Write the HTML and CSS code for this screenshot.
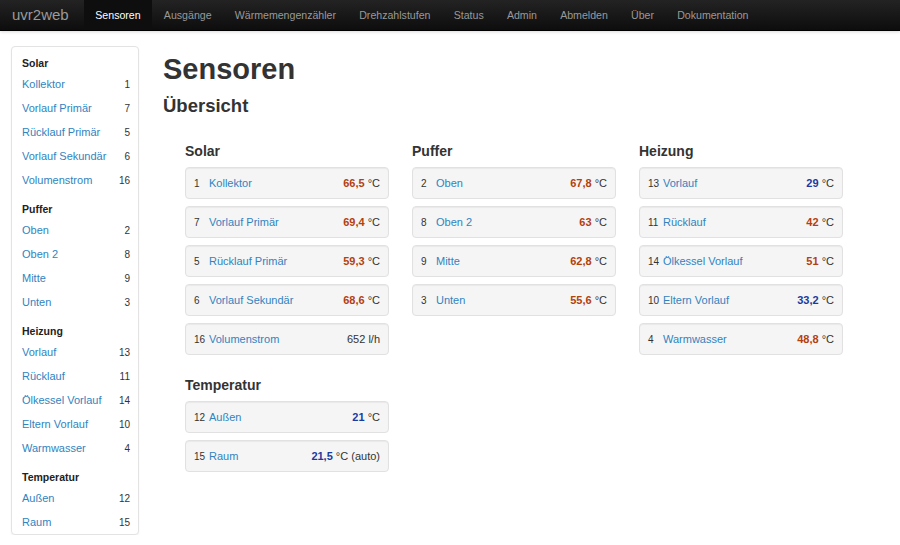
FILE: index.html
```html
<!DOCTYPE html>
<html lang="de">
<head>
<meta charset="utf-8">
<title>uvr2web – Sensoren</title>
<link rel="stylesheet" href="styles.css">
</head>
<body>
<header class="navbar">
  <a class="brand" href="#">uvr2web</a>
  <nav class="nav">
    <a class="nav-item active" href="#">Sensoren</a>
    <a class="nav-item" href="#">Ausgänge</a>
    <a class="nav-item" href="#">Wärmemengenzähler</a>
    <a class="nav-item" href="#">Drehzahlstufen</a>
    <a class="nav-item" href="#">Status</a>
    <a class="nav-item" href="#">Admin</a>
    <a class="nav-item" href="#">Abmelden</a>
    <a class="nav-item" href="#">Über</a>
    <a class="nav-item" href="#">Dokumentation</a>
  </nav>
</header>

<div class="container">
  <aside class="sidebar">
    <div class="side-header first">Solar</div>
    <a class="side-item" href="#"><span>Kollektor</span><span class="side-num">1</span></a>
    <a class="side-item" href="#"><span>Vorlauf Primär</span><span class="side-num">7</span></a>
    <a class="side-item" href="#"><span>Rücklauf Primär</span><span class="side-num">5</span></a>
    <a class="side-item" href="#"><span>Vorlauf Sekundär</span><span class="side-num">6</span></a>
    <a class="side-item" href="#"><span>Volumenstrom</span><span class="side-num">16</span></a>
    <div class="side-header">Puffer</div>
    <a class="side-item" href="#"><span>Oben</span><span class="side-num">2</span></a>
    <a class="side-item" href="#"><span>Oben 2</span><span class="side-num">8</span></a>
    <a class="side-item" href="#"><span>Mitte</span><span class="side-num">9</span></a>
    <a class="side-item" href="#"><span>Unten</span><span class="side-num">3</span></a>
    <div class="side-header">Heizung</div>
    <a class="side-item" href="#"><span>Vorlauf</span><span class="side-num">13</span></a>
    <a class="side-item" href="#"><span>Rücklauf</span><span class="side-num">11</span></a>
    <a class="side-item" href="#"><span>Ölkessel Vorlauf</span><span class="side-num">14</span></a>
    <a class="side-item" href="#"><span>Eltern Vorlauf</span><span class="side-num">10</span></a>
    <a class="side-item" href="#"><span>Warmwasser</span><span class="side-num">4</span></a>
    <div class="side-header">Temperatur</div>
    <a class="side-item" href="#"><span>Außen</span><span class="side-num">12</span></a>
    <a class="side-item" href="#"><span>Raum</span><span class="side-num">15</span></a>
  </aside>

  <main class="main">
    <h1 class="title">Sensoren</h1>
    <h2 class="subtitle">Übersicht</h2>
    <div class="columns">
      <div class="col">
        <h3 class="group">Solar</h3>
        <div class="card"><span class="num">1</span><a class="name" href="#">Kollektor</a><span class="val"><b class="hot">66,5</b> °C</span></div>
        <div class="card"><span class="num">7</span><a class="name" href="#">Vorlauf Primär</a><span class="val"><b class="hot">69,4</b> °C</span></div>
        <div class="card"><span class="num">5</span><a class="name" href="#">Rücklauf Primär</a><span class="val"><b class="hot">59,3</b> °C</span></div>
        <div class="card"><span class="num">6</span><a class="name" href="#">Vorlauf Sekundär</a><span class="val"><b class="hot">68,6</b> °C</span></div>
        <div class="card"><span class="num">16</span><a class="name" href="#">Volumenstrom</a><span class="val">652 l/h</span></div>
        <h3 class="group spaced">Temperatur</h3>
        <div class="card"><span class="num">12</span><a class="name" href="#">Außen</a><span class="val"><b class="cold">21</b> °C</span></div>
        <div class="card"><span class="num">15</span><a class="name" href="#">Raum</a><span class="val"><b class="cold">21,5</b> °C (auto)</span></div>
      </div>
      <div class="col">
        <h3 class="group">Puffer</h3>
        <div class="card"><span class="num">2</span><a class="name" href="#">Oben</a><span class="val"><b class="hot">67,8</b> °C</span></div>
        <div class="card"><span class="num">8</span><a class="name" href="#">Oben 2</a><span class="val"><b class="hot">63</b> °C</span></div>
        <div class="card"><span class="num">9</span><a class="name" href="#">Mitte</a><span class="val"><b class="hot">62,8</b> °C</span></div>
        <div class="card"><span class="num">3</span><a class="name" href="#">Unten</a><span class="val"><b class="hot">55,6</b> °C</span></div>
      </div>
      <div class="col">
        <h3 class="group">Heizung</h3>
        <div class="card"><span class="num">13</span><a class="name" href="#">Vorlauf</a><span class="val"><b class="cold">29</b> °C</span></div>
        <div class="card"><span class="num">11</span><a class="name" href="#">Rücklauf</a><span class="val"><b class="hot">42</b> °C</span></div>
        <div class="card"><span class="num">14</span><a class="name" href="#">Ölkessel Vorlauf</a><span class="val"><b class="hot">51</b> °C</span></div>
        <div class="card"><span class="num">10</span><a class="name" href="#">Eltern Vorlauf</a><span class="val"><b class="cold">33,2</b> °C</span></div>
        <div class="card"><span class="num">4</span><a class="name" href="#">Warmwasser</a><span class="val"><b class="hot">48,8</b> °C</span></div>
      </div>
    </div>
  </main>
</div>
</body>
</html>
```
FILE: styles.css
```css
* { box-sizing: border-box; }

html, body {
  margin: 0;
  padding: 0;
  background: #fff;
  color: #333;
  font-family: "Liberation Sans", Arial, sans-serif;
  font-size: 11px;
}

a { text-decoration: none; }

.navbar {
  display: flex;
  align-items: stretch;
  height: 31px;
  background: linear-gradient(#232323, #0d0d0d);
  border-bottom: 1px solid #000;
  box-shadow: 0 1px 3px rgba(0,0,0,0.15);
  padding-left: 12px;
}

.brand {
  color: #9a9a9a;
  font-size: 15px;
  line-height: 30px;
  margin-right: 15px;
}

.nav { display: flex; }

.nav-item {
  color: #999;
  font-size: 10.6px;
  line-height: 30px;
  padding: 0 11.6px;
}

.nav-item.active {
  color: #fff;
  background: #0e0e0e;
}

.container {
  display: flex;
  align-items: flex-start;
  padding: 15px 0 0 11px;
}

.sidebar {
  width: 128px;
  flex: none;
  border: 1px solid #e3e3e3;
  border-radius: 4px;
  background: #fff;
  box-shadow: 0 1px 2px rgba(0,0,0,0.05);
  padding: 7px 0 0;
}

.side-header {
  height: 18px;
  line-height: 18px;
  margin-top: 8px;
  padding-left: 10px;
  font-weight: bold;
  font-size: 10.5px;
  color: #222;
}

.side-header.first { margin-top: 0; }

.side-item {
  display: flex;
  justify-content: space-between;
  align-items: center;
  height: 24px;
  padding: 0 8px 0 10px;
  color: #3183c0;
  font-size: 11px;
}

.side-num {
  color: #333;
  font-size: 10px;
}

.main {
  padding-left: 24px;
  flex: 1;
}

.title {
  margin: 6px 0 0;
  font-size: 29px;
  line-height: 34px;
  font-weight: bold;
  color: #333;
}

.subtitle {
  margin: 8px 0 0;
  font-size: 18.5px;
  line-height: 24px;
  font-weight: bold;
  color: #333;
}

.columns {
  display: flex;
  gap: 23px;
  margin: 22px 0 0 22px;
}

.col {
  width: 204px;
  flex: none;
}

.group {
  margin: 0 0 5px;
  font-size: 14px;
  line-height: 22px;
  font-weight: bold;
  color: #333;
}

.group.spaced { margin-top: 19px; }

.card {
  display: flex;
  align-items: center;
  height: 32px;
  margin-bottom: 7px;
  padding: 0 8px 0 8px;
  background: #f5f5f5;
  border: 1px solid #e1e1e1;
  border-radius: 4px;
  box-shadow: inset 0 1px 1px rgba(0,0,0,0.05);
  font-size: 11px;
}

.num {
  width: 15px;
  flex: none;
  font-size: 10px;
  color: #333;
}

.name {
  flex: 1;
  color: #3183c0;
}

.val {
  color: #333;
  white-space: nowrap;
}

.hot { color: #b3400f; }
.cold { color: #1b3a9f; }
```
